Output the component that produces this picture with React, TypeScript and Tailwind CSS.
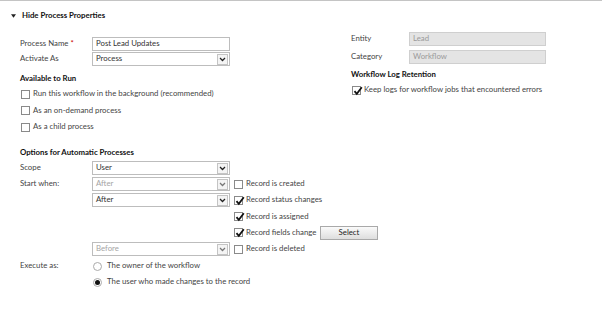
import React from 'react';

const font = { fontFamily: 'Lato, "Open Sans", sans-serif' };

function Check() {
  return (
    <svg viewBox="0 0 10 10" className="absolute -top-[1px] left-[0px] w-[10px] h-[10px]">
      <path d="M1.5 5.2 L3.8 7.8 L8.8 1.2" fill="none" stroke="#111" strokeWidth="1.8" />
    </svg>
  );
}

function Box({ checked }: { checked?: boolean }) {
  return (
    <span className="relative inline-block w-[9px] h-[9px] border border-[#8a8a8a] bg-white shrink-0">
      {checked && <Check />}
    </span>
  );
}

function CheckRow({ label, checked }: { label: string; checked?: boolean }) {
  return (
    <div className="flex items-center gap-[3px] h-[16px]">
      <Box checked={checked} />
      <span>{label}</span>
    </div>
  );
}

function Radio({ checked }: { checked?: boolean }) {
  return (
    <span className="inline-flex items-center justify-center w-[9px] h-[9px] rounded-full border border-[#aaa] bg-white shrink-0">
      {checked && <span className="w-[5px] h-[5px] rounded-full bg-[#111]" />}
    </span>
  );
}

function Dropdown({ value, disabled }: { value: string; disabled?: boolean }) {
  return (
    <div className="flex items-center w-[138px] h-[14px] border border-[#bdbdbd] bg-white shrink-0">
      <span className={`flex-1 pl-[3px] ${disabled ? 'text-[#a5a5a5]' : 'text-[#333]'}`}>{value}</span>
      <span className="flex items-center justify-center w-[11px] h-[11px] mr-[1px] border border-[#c4c4c4] bg-[#f4f4f4]">
        <svg viewBox="0 0 8 6" className="w-[7px] h-[5px]">
          <path d="M1 1.2 L4 4.2 L7 1.2" fill="none" stroke={disabled ? '#777' : '#222'} strokeWidth="1.5" />
        </svg>
      </span>
    </div>
  );
}

function Label({ children }: { children: React.ReactNode }) {
  return <span className="w-[72px] shrink-0">{children}</span>;
}

export default function App() {
  return (
    <div
      className="w-[602px] h-[313px] bg-white border-t border-[#c4c4c4] text-[7.8px] text-[#444] overflow-hidden whitespace-nowrap"
      style={font}
    >
      {/* Header */}
      <div className="flex items-center h-[24px] pt-[6px] pl-[11px] gap-[6px] font-bold text-[#111]">
        <svg viewBox="0 0 6 4" className="w-[5px] h-[4px]">
          <path d="M0 0 L6 0 L3 4 Z" fill="#222" />
        </svg>
        <span>Hide Process Properties</span>
      </div>

      <div className="flex">
        {/* Left column */}
        <div className="w-[331px] shrink-0 pl-[20px]">
          <div className="flex flex-col gap-[1px] mt-[12px]">
            <div className="flex items-center h-[14px]">
              <Label>
                Process Name <span className="text-[#c00]">*</span>
              </Label>
              <div className="w-[138px] h-[14px] border border-[#bdbdbd] pl-[3px] flex items-center text-[#333]">
                Post Lead Updates
              </div>
            </div>
            <div className="flex items-center h-[14px]">
              <Label>Activate As</Label>
              <Dropdown value="Process" />
            </div>
          </div>

          <div className="flex items-center h-[14px] mt-[6px] font-bold text-[#111]">Available to Run</div>
          <div className="pl-[1px] flex flex-col gap-[0.5px]">
            <CheckRow label="Run this workflow in the background (recommended)" />
            <CheckRow label="As an on-demand process" />
            <CheckRow label="As a child process" />
          </div>

          <div className="flex items-center h-[14px] mt-[11px] font-bold text-[#111]">Options for Automatic Processes</div>
          <div className="flex h-[16px] items-center">
            <Label>Scope</Label>
            <Dropdown value="User" />
          </div>
          <div className="flex">
            <Label>
              <div className="h-[16px] flex items-center">Start when:</div>
            </Label>
            <div className="flex flex-col gap-[0.25px]">
              <div className="flex items-center h-[16px] gap-[4px]">
                <Dropdown value="After" disabled />
                <CheckRow label="Record is created" />
              </div>
              <div className="flex items-center h-[16px] gap-[4px]">
                <Dropdown value="After" />
                <CheckRow label="Record status changes" checked />
              </div>
              <div className="flex items-center h-[16px] pl-[142px]">
                <CheckRow label="Record is assigned" checked />
              </div>
              <div className="flex items-center h-[16px] pl-[142px]">
                <div className="w-[86px]">
                  <CheckRow label="Record fields change" checked />
                </div>
                <button className="w-[58px] h-[14px] border border-[#a9a9a9] bg-gradient-to-b from-[#fafafa] to-[#dedede] text-[#222] text-[7.8px]">
                  Select
                </button>
              </div>
              <div className="flex items-center h-[16px] gap-[4px]">
                <Dropdown value="Before" disabled />
                <CheckRow label="Record is deleted" />
              </div>
            </div>
          </div>

          <div className="flex mt-[1px]">
            <Label>
              <div className="h-[16px] flex items-center">Execute as:</div>
            </Label>
            <div className="flex flex-col">
              <div className="flex items-center h-[16px] gap-[5px] pl-[1px]">
                <Radio />
                <span>The owner of the workflow</span>
              </div>
              <div className="flex items-center h-[16px] gap-[5px] pl-[1px]">
                <Radio checked />
                <span>The user who made changes to the record</span>
              </div>
            </div>
          </div>
        </div>

        {/* Right column */}
        <div className="pl-[20px]">
          <div className="flex flex-col gap-[4px] mt-[7px]">
            <div className="flex items-center h-[14px]">
              <span className="w-[58px] shrink-0">Entity</span>
              <div className="w-[137px] h-[14px] bg-[#e4e4e4] border border-[#cfcfcf] pl-[3px] flex items-center text-[#9a9a9a]">
                Lead
              </div>
            </div>
            <div className="flex items-center h-[14px]">
              <span className="w-[58px] shrink-0">Category</span>
              <div className="w-[137px] h-[14px] bg-[#e4e4e4] border border-[#cfcfcf] pl-[3px] flex items-center text-[#9a9a9a]">
                Workflow
              </div>
            </div>
          </div>
          <div className="flex items-center h-[14px] mt-[4px] font-bold text-[#111]">Workflow Log Retention</div>
          <div className="pl-[1px]">
            <CheckRow label="Keep logs for workflow jobs that encountered errors" checked />
          </div>
        </div>
      </div>
    </div>
  );
}
